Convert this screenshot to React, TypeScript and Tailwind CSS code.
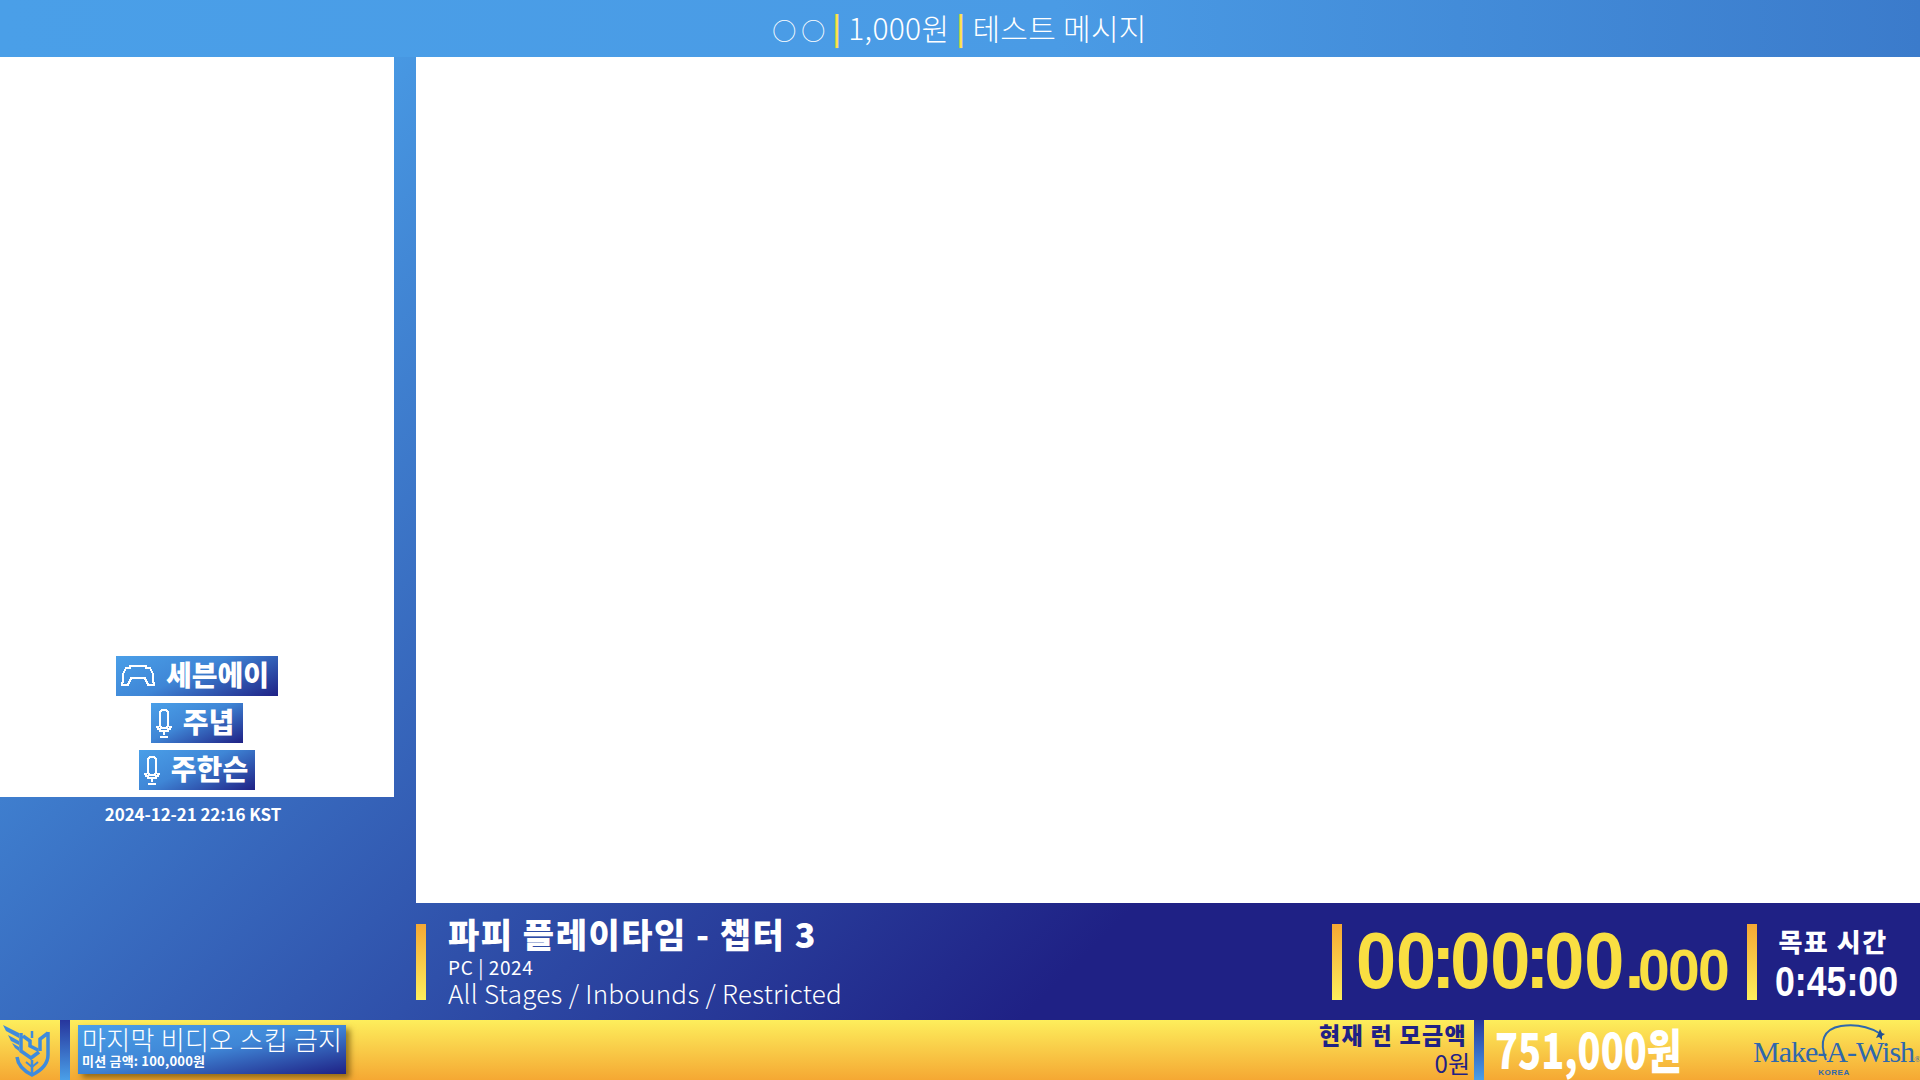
const kr = "font-['Noto_Sans_CJK_KR','Noto_Sans',sans-serif]";

function PadIcon() {
  return (
    <svg width="34" height="22" viewBox="0 0 34 22" fill="none" stroke="white" strokeWidth="2.2" shapeRendering="crispEdges">
      <path d="M9 1 H25 V3 H29 L32 9 V15 L33 20 H27 L24 13 H10 L7 20 H1 L2 15 V9 L5 3 H9Z" />
    </svg>
  );
}

function MicIcon() {
  return (
    <svg width="16" height="29" viewBox="0 0 16 29" fill="none" stroke="white" strokeWidth="2" shapeRendering="crispEdges">
      <path d="M6 1 H10 L12 3 V17 L10 19 H6 L4 17 V3Z" />
      <path d="M0 18 H2 V20 H4 V22 H12 V20 H14 V18 H16" />
      <path d="M8 22 V26 M4 28 H12" />
    </svg>
  );
}

function Tag({ icon, label, pr }: { icon: "pad" | "mic"; label: string; pr: string }) {
  return (
    <div className={`flex h-10 items-center gap-[11px] bg-[linear-gradient(155deg,#4a9fe8_0%,#3f86d6_45%,#1f2185_100%)] pl-[5px] ${pr}`}>
      {icon === "pad" ? <PadIcon /> : <MicIcon />}
      <span className="pb-1 text-[28px] font-black leading-none text-white">{label}</span>
    </div>
  );
}

function Shield() {
  return (
    <svg width="50" height="60" viewBox="0 0 50 60" fill="none" stroke="#3f8bdc">
      <path d="M3 5 L19 13 L19 18 L6 11Z M8 15 L19 21 L19 25 L11 21Z M12 23 L19 27 L19 31 L15 28Z" fill="#3f8bdc" stroke="none" />
      <path d="M21 13 L21 31 L31 38 L39 32 M23 16 L30 21 L30 26 L38 30" strokeWidth="3.5" />
      <path d="M48 12 L48 35 C48 45 40 51 32 55 C24 51 18 46 17 37 M48 13 L40 19 L40 31" strokeWidth="3.5" />
      <path d="M32 11 L32 18 M32 40 L32 55" strokeWidth="2.5" />
      <path d="M26 42 L32 47 L38 42" strokeWidth="2" />
    </svg>
  );
}

function MakeAWish() {
  return (
    <div className="relative h-[60px] w-[167px] shrink-0 text-[#2f68ad]">
      <svg className="absolute left-[66px] top-0" width="66" height="42" viewBox="0 0 66 42" fill="none">
        <path d="M7 40 C0 22 4 9 22 6 C36 4 50 7 60 13" stroke="#2f68ad" strokeWidth="2" />
        <path d="M61 9 L63 13 L66 14 L63 16 L63 20 L60 17 L57 18 L59 14Z" fill="#1f4f94" />
      </svg>
      <div className="absolute left-0 right-0 top-[14px] whitespace-nowrap pr-1 text-center font-['Liberation_Serif',serif] text-[30px] leading-9 tracking-[-1px]">
        Make-A-Wish<span className="text-[9px]">®</span>
      </div>
      <div className="absolute left-0 right-0 top-[48px] pr-[5px] text-center font-['Liberation_Sans',sans-serif] text-[8px] font-bold leading-[10px] tracking-[0.5px]">
        KOREA
      </div>
    </div>
  );
}

function Timer() {
  return (
    <div className="ml-3.5 flex h-[76px] w-[369px] shrink-0 items-end pb-[9px] font-['Liberation_Sans',sans-serif] font-bold leading-none text-[#f9df42]">
      <div className="w-[278px] shrink-0 whitespace-nowrap">
        <span className="inline-block origin-left scale-x-[0.9] text-[80px] leading-[58px]">
          00<span className="-mx-[5.5px]">:</span>00<span className="-mx-[5.5px]">:</span>00.
        </span>
      </div>
      <div className="ml-1 whitespace-nowrap text-[57px] leading-[41px] tracking-[-1.7px]">000</div>
    </div>
  );
}

const barClass = "h-[76px] w-2.5 shrink-0 bg-[linear-gradient(180deg,#f5a833,#fdee5c)]";

export default function App() {
  return (
    <div className={`flex h-[1080px] w-[1920px] flex-col overflow-hidden bg-[linear-gradient(135deg,#4a9fe8_0%,#4a9fe8_12%,#1f2185_68%)] ${kr}`}>
      <div className="flex h-[57px] shrink-0 items-center justify-center bg-[linear-gradient(90deg,#4a9fe8_0%,#4a9be5_55%,#3b7bcb_100%)] pb-1 pr-1.5 text-[30px] font-light leading-none tracking-[0.3px] text-white">
        <span>
          <span className="-mr-[5px] ml-[5px] text-[24px] tracking-[5px]">○○</span> <span className="font-bold text-[#fbe14a]">|</span> 1,000원 <span className="font-bold text-[#fbe14a]">|</span> 테스트 메시지
        </span>
      </div>

      <div className="flex min-h-0 flex-1">
        <div className="flex w-[394px] shrink-0 flex-col">
          <div className="flex h-[740px] flex-col items-center justify-end gap-[7px] bg-white pb-[7px]">
            <Tag icon="pad" label="세븐에이" pr="pr-[9px]" />
            <Tag icon="mic" label="주녑" pr="pr-[9px]" />
            <Tag icon="mic" label="주한슨" pr="pr-[7px]" />
          </div>
          <div className="mt-[5px] pr-2 text-center text-[17px] font-bold leading-6 tracking-[-0.1px] text-white">2024-12-21 22:16 KST</div>
        </div>

        <div className="ml-[22px] flex min-w-0 flex-1 flex-col">
          <div className="h-[846px] bg-white" />
          <div className="flex flex-1 items-center">
            <div className={barClass} />
            <div className="ml-[22px] flex flex-col text-white">
              <div className="pb-1 text-[34px] font-black leading-[36px] tracking-[1.5px]">파피 플레이타임 - 챕터 3</div>
              <div className="text-[19px] leading-[22px] tracking-[0.6px]">PC | 2024</div>
              <div className="text-[26px] font-light leading-[30px] tracking-[0.3px]">All Stages / Inbounds / Restricted</div>
            </div>
            <div className="ml-auto flex items-center">
              <div className={barClass} />
              <Timer />
              <div className={`ml-[22px] ${barClass}`} />
              <div className="ml-[18px] mr-[21px] flex w-[124px] flex-col items-center text-white">
                <div className="whitespace-nowrap pb-[9px] pr-[8px] text-[26px] font-black leading-[32px] tracking-[1.5px]">목표 시간</div>
                <div className="scale-x-[0.85] pr-[2px] font-['Liberation_Sans',sans-serif] text-[42px] font-bold leading-[32px]">0:45:00</div>
              </div>
            </div>
          </div>
        </div>
      </div>

      <div className="flex h-[60px] shrink-0 items-stretch bg-[linear-gradient(180deg,#fdee5c_0%,#f5a833_100%)]">
        <div className="flex w-[60px] shrink-0 items-center">
          <Shield />
        </div>
        <div className="w-2.5 bg-[linear-gradient(180deg,#27369d,#4a9fe8)]" />
        <div className="ml-2 mt-[5px] h-[49px] w-[268px] bg-[linear-gradient(170deg,#4a9fe8_0%,#3f86d6_50%,#1f2185_100%)] px-1 text-white shadow-[4px_4px_6px_rgba(80,60,0,0.6)]">
          <div className="-mt-0.5 whitespace-nowrap text-[26px] font-light leading-[31px] tracking-[0.3px]">마지막 비디오 스킵 금지</div>
          <div className="whitespace-nowrap text-[13px] font-bold leading-[14px] tracking-[0.2px]">미션 금액: 100,000원</div>
        </div>
        <div className="ml-auto flex flex-col items-end pr-[7px] text-[#1f2185]">
          <div className="text-[23px] font-black leading-[28px] tracking-[1.3px]">현재 런 모금액</div>
          <div className="-mr-[3px] text-[24px] leading-[30px]">0원</div>
        </div>
        <div className="w-2.5 bg-[linear-gradient(180deg,#27369d,#4a9fe8)]" />
        <div className="ml-[11px] flex w-[258px] items-center text-white">
          <span className="origin-left scale-x-[0.79] whitespace-nowrap pb-1 text-[48px] font-black leading-none">751,000원</span>
        </div>
        <MakeAWish />
      </div>
    </div>
  );
}
